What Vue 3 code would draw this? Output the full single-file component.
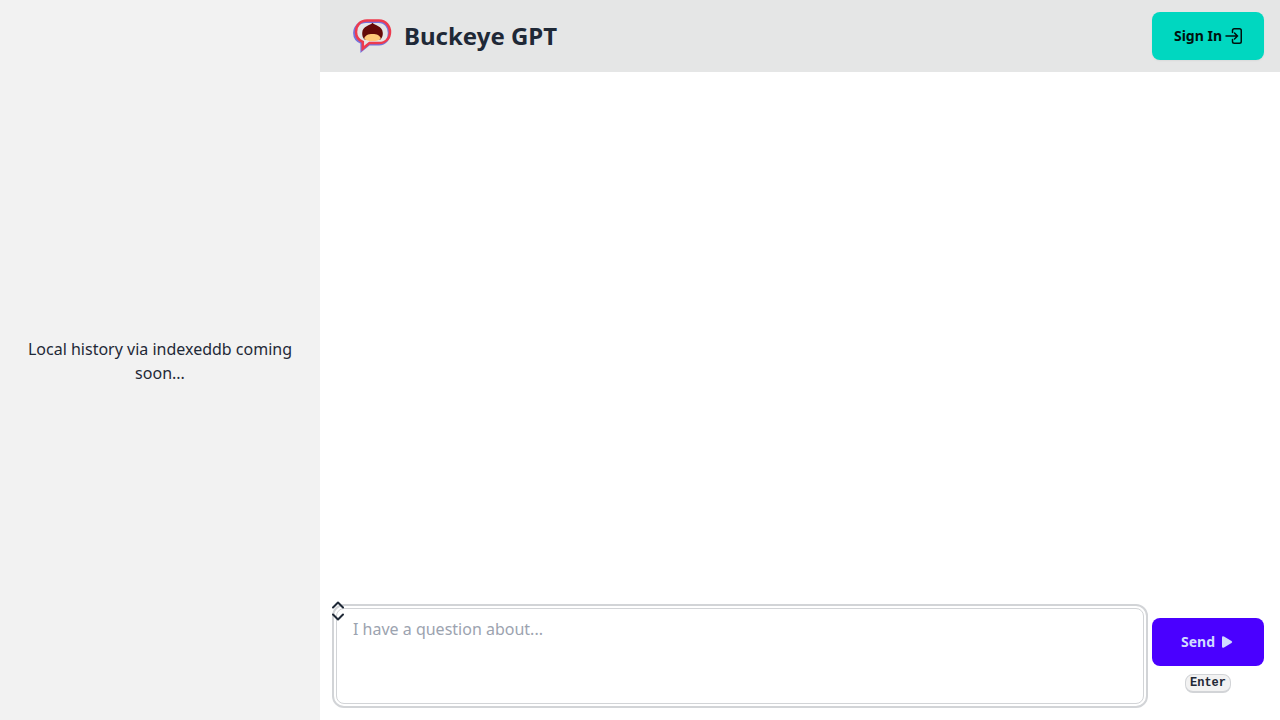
<script setup>
import { ref } from 'vue'

const question = ref('')
</script>

<template>
  <div class="layout">
    <aside class="sidebar">
      <p>Local history via indexeddb coming soon...</p>
    </aside>

    <div class="page">
      <header class="navbar">
        <div class="brand">
          <svg class="logo" viewBox="0 0 40 40" aria-hidden="true">
            <g fill="none" stroke-linejoin="miter">
              <path stroke="#7672dc" stroke-width="2.400" d="M14 5.800H26.500C33.500 5.800 37 11 37 17C37 23.500 33.500 28.300 27 28.300H17L9.600 34.500V27C4.700 25 2.300 21 2.300 17C2.300 11 7 5.800 14 5.800Z" />
              <path stroke="#ee3b4e" stroke-width="2.500" d="M15 4.600H27C34 4.600 38 10 38 16C38 22 34 27 27 27H17.500L10.800 32.500V26C6.400 24 4 20.500 4 16C4 9.500 8 4.600 15 4.600Z" />
            </g>
            <path fill="#640a08" d="M20.500 6.800C22.500 9.500 30.600 10 30.800 17C31 20 29.800 22 28.500 23.500H12.500C11 22 10 19.500 10.200 17C10.400 10 18.500 9.500 20.500 6.800Z" />
            <path fill="#ffc878" d="M12.200 22.500C13.200 19.200 16 18 20.500 18S27.800 19.200 28.800 22.500C27 24.500 24.500 25 20.500 25S14 24.500 12.200 22.500Z" />
          </svg>
          <h1>Buckeye GPT</h1>
        </div>
        <button class="btn accent" type="button">
          Sign In
          <svg class="login" viewBox="0 0 16 16" aria-hidden="true">
            <path d="M6.500 4.500V2.500Q6.500 .75 8.250 .75H13.500Q15.250 .75 15.250 2.500V13.500Q15.250 15.250 13.500 15.250H8.250Q6.500 15.250 6.500 13.500V11.500M0 8H11.500M8.500 5L11.500 8L8.500 11" />
          </svg>
        </button>
      </header>

      <main class="messages"></main>

      <form class="composer" @submit.prevent>
        <div class="field">
          <textarea v-model="question" aria-label="Question" placeholder="I have a question about..."></textarea>
          <button class="resize" type="button" aria-label="Resize question box">
            <svg viewBox="0 0 12 20" aria-hidden="true">
              <path d="M1 6.500L6 1.500L11 6.500M1 13.500L6 18.500L11 13.500" />
            </svg>
          </button>
        </div>
        <div class="actions">
          <button class="btn primary" type="submit">
            Send
            <svg class="play" viewBox="0 0 12 14" aria-hidden="true">
              <path d="M1 2.500Q1 .5 3 1.500L10.500 6Q12 7 10.500 8L3 12.500Q1 13.500 1 11.500Z" />
            </svg>
          </button>
          <kbd>Enter</kbd>
        </div>
      </form>
    </div>
  </div>
</template>

<style>
body {
  margin: 0;
}
</style>

<style scoped>
.layout {
  display: flex;
  height: 100vh;
  background: #fff;
  color: #1f2937;
  font: 16px/24px "Noto Sans", sans-serif;
}
.layout * {
  box-sizing: border-box;
}
.sidebar {
  display: flex;
  flex: 0 0 320px;
  align-items: center;
  justify-content: center;
  padding: 18px 16px 16px;
  background: #f2f2f2;
  text-align: center;
}
.sidebar p {
  margin: 0;
}
.page {
  display: flex;
  flex: 1;
  flex-direction: column;
  min-width: 0;
}
.navbar {
  display: flex;
  align-items: center;
  justify-content: space-between;
  padding: 12px 16px;
  background: #e5e6e6;
}
.brand {
  display: flex;
  align-items: center;
  gap: 12px;
  padding-left: 16px;
}
.logo {
  width: 40px;
  height: 40px;
}
h1 {
  margin: 0;
  font-size: 24px;
  line-height: 32px;
  font-weight: 700;
}
.btn {
  display: flex;
  align-items: center;
  justify-content: center;
  gap: 4px;
  width: 112px;
  height: 48px;
  padding: 0;
  border: 0;
  border-radius: 8px;
  font: 700 14px/14px "Noto Sans", sans-serif;
  cursor: pointer;
}
.accent {
  background: #00d7c0;
  color: #00110e;
  box-shadow: 0 1px 2px rgb(0 0 0 / 5%);
}
.primary {
  background: #4a00ff;
  color: #d1dbff;
}
.login {
  width: 16px;
  height: 16px;
  fill: none;
  stroke: currentColor;
  stroke-width: 1.5;
  stroke-linecap: round;
  overflow: visible;
}
.play {
  width: 16px;
  height: 14px;
  fill: currentColor;
}
.messages {
  flex: 1;
  overflow-y: auto;
}
.composer {
  display: flex;
  align-items: center;
  gap: 8px;
  padding: 16px;
}
.field {
  position: relative;
  flex: 1;
}
textarea {
  display: block;
  width: 100%;
  height: 96px;
  padding: 8px 16px;
  border: 1px solid #d2d4d7;
  border-radius: 8px;
  outline: 2px solid #d2d4d7;
  outline-offset: 2px;
  background: #fff;
  color: inherit;
  font: inherit;
  resize: none;
}
textarea::placeholder {
  color: #9ca3af;
  opacity: 1;
}
.resize {
  position: absolute;
  top: -7px;
  left: -4px;
  width: 12px;
  height: 20px;
  padding: 0;
  border: 0;
  background: none;
  color: inherit;
  cursor: ns-resize;
}
.resize svg {
  display: block;
  fill: none;
  stroke: currentColor;
  stroke-width: 2;
  stroke-linecap: round;
  stroke-linejoin: round;
}
.actions {
  display: flex;
  flex-direction: column;
  align-items: center;
  gap: 8px;
  padding-bottom: 1px;
}
kbd {
  padding: 0 4px;
  border: 1px solid #d2d4d7;
  border-bottom-width: 2px;
  border-radius: 8px;
  background: #f2f2f2;
  font: 700 12px/16px "Liberation Mono", monospace;
}
</style>
